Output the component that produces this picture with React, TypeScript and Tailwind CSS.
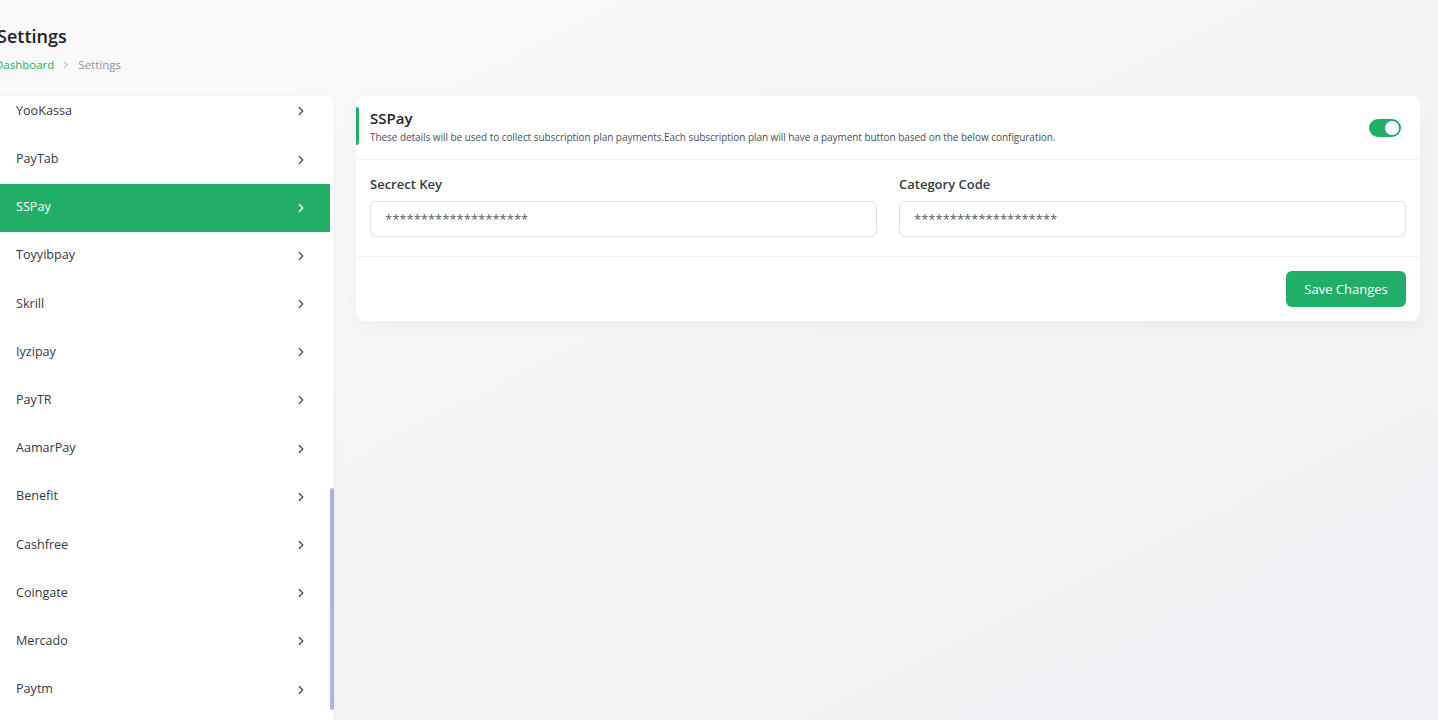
import React from "react";
import { ChevronRight } from "lucide-react";

const gateways = [
	"YooKassa",
	"PayTab",
	"SSPay",
	"Toyyibpay",
	"Skrill",
	"Iyzipay",
	"PayTR",
	"AamarPay",
	"Benefit",
	"Cashfree",
	"Coingate",
	"Mercado",
	"Paytm",
	"Payfast",
];

const Field = ({ label }: { label: string }) => (
	<div className="flex-1">
		<div className="text-[13px] font-semibold text-[#333a44] mb-[8px] leading-[18px]">{label}</div>
		<div className="h-9 border border-[#dfe2e6] rounded-md flex items-center px-[14px] text-[13px] text-[#555c66]">
			********************
		</div>
	</div>
);

export default function App() {
	return (
		<div
			className="h-[720px] w-[1438px] overflow-hidden bg-gradient-to-br from-[#fafafb] to-[#eef0f3]"
			style={{ fontFamily: '"Open Sans", "Noto Sans", sans-serif' }}
		>
			{/* page title */}
			<div className="-ml-[3px] pt-[24px]">
				<h1 className="text-[18px] font-semibold text-[#1f2329] leading-[24px]">Settings</h1>
				<div className="flex items-center gap-[6px] text-[11.5px] mt-[8px] -ml-[2px]">
					<span className="text-[#21ad66]">Dashboard</span>
					<ChevronRight size={12} className="text-[#9aa0a6]" />
					<span className="text-[#8d9399]">Settings</span>
				</div>
			</div>

			<div className="flex gap-[22px] mt-[23px] items-start">
				{/* sidebar */}
				<div className="relative w-[334px] h-[640px] bg-white rounded-tr-lg overflow-hidden shadow-sm">
					<div className="flex flex-col pr-[4px] -mt-[9px]">
						{gateways.map((g) => (
							<div
								key={g}
								className={
									"h-[48.2px] shrink-0 flex items-center justify-between pl-4 pr-[22px] text-[12.6px] " +
									(g === "SSPay" ? "bg-[#21ae66] text-white" : "text-[#333a44]")
								}
							>
								<span>{g}</span>
								<ChevronRight size={14} strokeWidth={2.2} className={g === "SSPay" ? "text-white" : "text-[#4a5058]"} />
							</div>
						))}
					</div>
					<div className="absolute right-0 top-[392px] w-[4px] h-[222px] rounded-full bg-[#aab5e3]" />
				</div>

				{/* main card */}
				<div className="w-[1064px] bg-white rounded-lg shadow-[0_4px_16px_rgba(0,0,0,0.04)]">
					<div className="flex items-center justify-between pr-[19px] h-[64px] border-b border-[#eef0f2]">
						<div className="flex items-stretch -mt-[4px]">
							<div className="w-[3px] bg-[#21ae66] rounded-r-sm" />
							<div className="pl-[11px]">
								<div className="text-[15px] font-semibold text-[#1f2329] leading-[22px]">SSPay</div>
								<div className="text-[10px] text-[#4a5058] leading-[16px] tracking-[-0.05px]">
									These details will be used to collect subscription plan payments.Each subscription plan will have a payment button based on the below configuration.
								</div>
							</div>
						</div>
						<div className="w-[32px] h-[18px] rounded-full bg-[#21ae66] flex items-center justify-end pr-[2px]">
							<div className="w-[14px] h-[14px] rounded-full bg-white" />
						</div>
					</div>
					<div className="flex gap-[22px] px-[14px] pt-[15px] pb-[19px] border-b border-[#eef0f2]">
						<Field label="Secrect Key" />
						<Field label="Category Code" />
					</div>
					<div className="flex justify-end px-[14px] py-[14px]">
						<button className="h-9 w-[120px] rounded-md bg-[#21ae66] text-white text-[13px] font-medium">
							Save Changes
						</button>
					</div>
				</div>
			</div>
		</div>
	);
}
